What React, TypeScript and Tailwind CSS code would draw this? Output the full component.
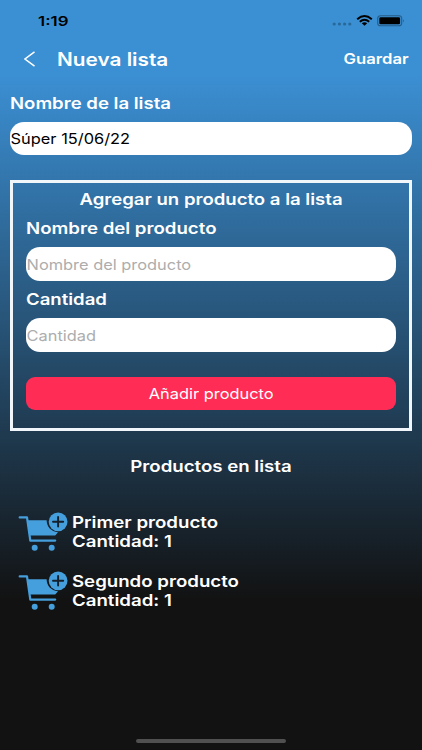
import React, { useState } from "react";

const font = "font-['Inter','Liberation_Sans',sans-serif]";

const CartIcon = () => (
  <svg width="50" height="40" viewBox="0 0 50 40" fill="none">
    <path
      d="M1.7 5.4H9L12.3 28.6H37.2"
      stroke="#459fdc"
      strokeWidth="2.2"
      strokeLinecap="round"
      strokeLinejoin="round"
    />
    <path
      d="M9.6 8.3H28.6C28.8 14.6 33 19.8 40 20.2L37.9 22.7Q37.2 23.6 36.2 23.6H12Z"
      fill="#459fdc"
    />
    <circle cx="16.7" cy="35.7" r="3" fill="#459fdc" />
    <circle cx="33.7" cy="35.7" r="3" fill="#459fdc" />
    <circle cx="40.1" cy="9.8" r="9.4" fill="#459fdc" />
    <path
      d="M40.1 5V14.6M35 9.8H45.2"
      stroke="#14202b"
      strokeWidth="1.9"
      strokeLinecap="round"
    />
  </svg>
);

const StatusBar = () => (
  <div className="flex justify-between h-[41px] pl-[37.5px] pr-[18px] text-black">
    <span className="mt-[11px] h-5 leading-5 text-[13.5px] font-semibold origin-left scale-x-[1.25]">
      1:19
    </span>
    <div className="flex items-start pt-[15px]">
      <svg width="72" height="12" viewBox="0 0 72 12" fill="none">
        <g fill="#286999">
          <circle cx="2.2" cy="9" r="1.6" />
          <circle cx="7.4" cy="9" r="1.6" />
          <circle cx="12.6" cy="9" r="1.6" />
          <circle cx="17.8" cy="9" r="1.6" />
        </g>
        <g stroke="#000" strokeWidth="1.9">
          <path d="M25.2 4.2Q32.5 -2 39.8 4.2" />
          <path d="M27.8 6.8Q32.5 2.9 37.2 6.8" />
        </g>
        <path d="M29.8 8.3Q32.5 6.3 35.2 8.3L32.5 10.8Z" fill="#000" />
        <rect
          x="45.7"
          y="0.8"
          width="24"
          height="10"
          rx="2.8"
          stroke="#265d89"
          strokeWidth="1.1"
        />
        <rect x="47.3" y="2.3" width="20.8" height="7" rx="1.4" fill="#000" />
        <path d="M71 4.2Q72.6 5.8 71 7.4Z" fill="#265d89" />
      </svg>
    </div>
  </div>
);

const Field = ({
  value,
  placeholder,
  onChange,
}: {
  value: string;
  placeholder?: string;
  onChange: (value: string) => void;
}) => (
  <div className="h-[33.5px] rounded-[14px] bg-white overflow-hidden">
    <input
      type="text"
      value={value}
      placeholder={placeholder}
      onChange={(e) => onChange(e.target.value)}
      className="block h-full w-[88%] pl-[0.5px] pt-px origin-left scale-x-[1.13] bg-transparent text-[14.5px] text-black outline-none placeholder:text-[#adadad]"
    />
  </div>
);

const products = [
  { name: "Primer producto", amount: 1 },
  { name: "Segundo producto", amount: 1 },
];

const App = () => {
  const [listName, setListName] = useState("Súper 15/06/22");
  const [productName, setProductName] = useState("");
  const [amount, setAmount] = useState("");

  return (
    <div
      className={`${font} flex flex-col w-[422px] h-[750px] overflow-hidden bg-[linear-gradient(to_bottom,#3b8fd3_75px,#121212_600px)] text-white`}>
      <StatusBar />
      <header className="flex items-center h-9 pl-6 pr-[13px]">
        <svg width="12" height="16" viewBox="0 0 12 16" fill="none">
          <path d="M10.5 0.8L1 8L10.5 15.2" stroke="#fff" strokeWidth="1.5" />
        </svg>
        <h1 className="ml-[20.5px] text-[18px] font-semibold origin-left scale-x-[1.155]">
          Nueva lista
        </h1>
        <button className="ml-auto text-[14.5px] font-semibold origin-right scale-x-[1.15]">
          Guardar
        </button>
      </header>

      <main className="flex flex-col px-[10px] pt-[13px]">
        <label className="h-[25px] mb-[6.5px] pt-px leading-[25px] text-base font-semibold origin-left scale-x-[1.16]">
          Nombre de la lista
        </label>
        <Field value={listName} onChange={setListName} />

        <section className="flex flex-col mt-[25px] h-[251px] border-[3px] border-[#f0f6fa] px-[13px] pt-1">
          <h2 className="h-[23px] pt-px leading-[23px] text-center text-base font-semibold scale-x-[1.16]">
            Agregar un producto a la lista
          </h2>
          <label className="mt-[6px] mb-[7px] h-6 leading-6 text-base font-semibold origin-left scale-x-[1.165]">
            Nombre del producto
          </label>
          <Field
            value={productName}
            placeholder="Nombre del producto"
            onChange={setProductName}
          />
          <label className="mt-[6.5px] mb-[7px] h-6 leading-6 text-base font-semibold origin-left scale-x-[1.16]">
            Cantidad
          </label>
          <Field value={amount} placeholder="Cantidad" onChange={setAmount} />
          <button className="mt-[25px] h-[33.5px] pt-px rounded-[9px] bg-[#ff2d55] text-[14.5px]">
            <span className="inline-block scale-x-[1.13]">Añadir producto</span>
          </button>
        </section>

        <h2 className="mt-[23px] h-6 leading-6 text-center text-base font-semibold scale-x-[1.165]">
          Productos en lista
        </h2>
        <ul className="mt-[34px] pl-2">
          {products.map((product) => (
            <li key={product.name} className="flex h-[58.5px]">
              <CartIcon />
              <div className="ml-[3.5px] mt-px text-base leading-[19px] font-semibold origin-left scale-x-[1.165]">
                <p>{product.name}</p>
                <p>Cantidad: {product.amount}</p>
              </div>
            </li>
          ))}
        </ul>
      </main>

      <div className="mt-auto mb-[7px] mx-auto h-[4px] w-[150px] rounded-full bg-[#505050]" />
    </div>
  );
};

export default App;
